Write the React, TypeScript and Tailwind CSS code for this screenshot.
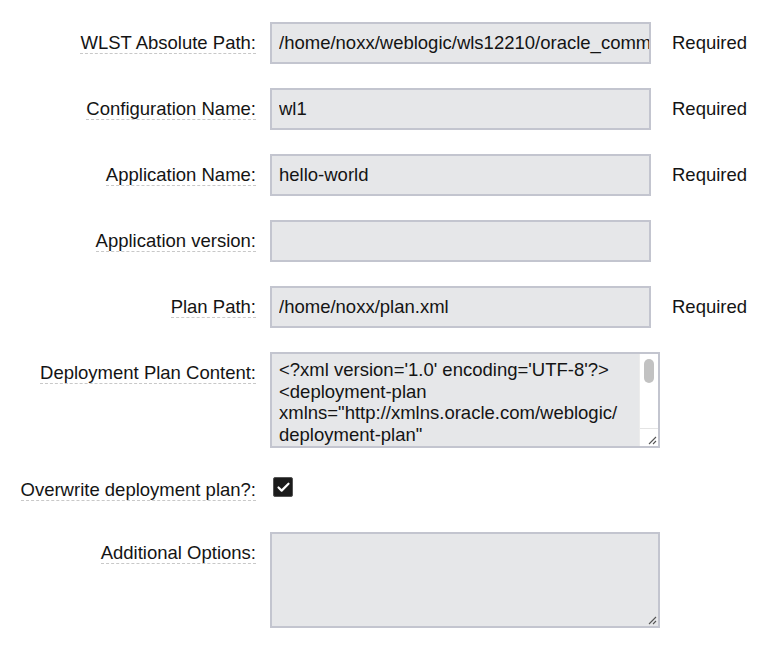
import { Check } from "lucide-react";

type Field = {
  label: string;
  value: string;
  required?: boolean;
};

const fields: Field[] = [
  {
    label: "WLST Absolute Path:",
    value: "/home/noxx/weblogic/wls12210/oracle_common/common/bin/wlst.sh",
    required: true,
  },
  { label: "Configuration Name:", value: "wl1", required: true },
  { label: "Application Name:", value: "hello-world", required: true },
  { label: "Application version:", value: "" },
  { label: "Plan Path:", value: "/home/noxx/plan.xml", required: true },
];

// zero-width spaces let the URL wrap after a slash, like the original
const planXml = `<?xml version='1.0' encoding='UTF-8'?>
<deployment-plan xmlns="http://xmlns.oracle.com/weblogic/\u200Bdeployment-plan" xmlns:xsi="http://www.w3.org/2001/XMLSchema-instance" xsi:schemaLocation="http://xmlns.oracle.com/weblogic/\u200Bdeployment-plan http://xmlns.oracle.com/weblogic/deployment-plan/1.0/deployment-plan.xsd">
  <application-name>hello-world</application-name>
</deployment-plan>`;

function Label({ text, lh = "leading-[42px]" }: { text: string; lh?: string }) {
  return (
    <div className={"w-[256px] shrink-0 text-right " + lh}>
      <span className="border-b border-dashed border-[#c8c8c8]">{text}</span>
    </div>
  );
}

function Grip() {
  return (
    <svg width="10" height="10" viewBox="0 0 10 10" className="absolute right-[1px] bottom-[1px]">
      <path d="M9 2 L2 9 M9 6 L6 9" stroke="#555" strokeWidth="1.1" />
    </svg>
  );
}

export default function App() {
  return (
    <div
      className="bg-white w-[766px] h-[647px] pt-[22px] text-[18.5px] text-[#141414]"
      style={{ fontFamily: '"Liberation Sans", Arial, sans-serif' }}
    >
      {fields.map((f) => (
        <div key={f.label} className="flex items-start mb-[24px]">
          <Label text={f.label} />
          <input
            readOnly
            defaultValue={f.value}
            className="ml-[14px] w-[381px] h-[42px] bg-[#e6e7e9] border-2 border-[#c3c5cf] pl-[7px] pr-0 text-[18.5px] text-[#141414] outline-none"
          />
          {f.required && (
            <span className="ml-[21px] leading-[42px]">Required</span>
          )}
        </div>
      ))}

      <div className="flex items-start mb-[24px]">
        <Label text="Deployment Plan Content:" />
        <div className="relative ml-[14px] w-[390px] h-[96px]">
          <textarea
            readOnly
            defaultValue={planXml}
            className="block w-full h-full bg-[#e6e7e9] border-2 border-[#c3c5cf] pl-[7px] pr-[22px] pt-[5px] text-[18.5px] leading-[21.7px] text-[#141414] outline-none resize-none overflow-hidden"
          />
          {/* scrollbar */}
          <div className="absolute top-[2px] bottom-[2px] right-[2px] w-[19px] bg-white border-l border-[#ececec] flex flex-col">
            <div className="flex-1 px-[4px] pt-[5px]">
              <div className="h-[24px] rounded-full bg-[#c2c2c2]" />
            </div>
            <div className="relative h-[18px] border-t border-[#e4e4e4]">
              <Grip />
            </div>
          </div>
        </div>
      </div>

      <div className="flex items-start mb-[24px] h-[36px]">
        <Label text="Overwrite deployment plan?:" lh="leading-[36px]" />
        <div className="ml-[17px] mt-[5px] w-[20px] h-[20px] rounded-[2px] bg-[#1b1b1b] border border-[#555] flex items-center justify-center">
          <Check className="w-[15px] h-[15px] text-white" strokeWidth={3.5} />
        </div>
      </div>

      <div className="flex items-start">
        <Label text="Additional Options:" />
        <div className="relative ml-[14px] w-[390px] h-[96px]">
          <textarea
            readOnly
            defaultValue=""
            className="block w-full h-full bg-[#e6e7e9] border-2 border-[#c3c5cf] px-[7px] py-[5px] text-[18.5px] outline-none resize-none"
          />
          <div className="absolute right-[2px] bottom-[2px] w-[12px] h-[12px]">
            <Grip />
          </div>
        </div>
      </div>
    </div>
  );
}
